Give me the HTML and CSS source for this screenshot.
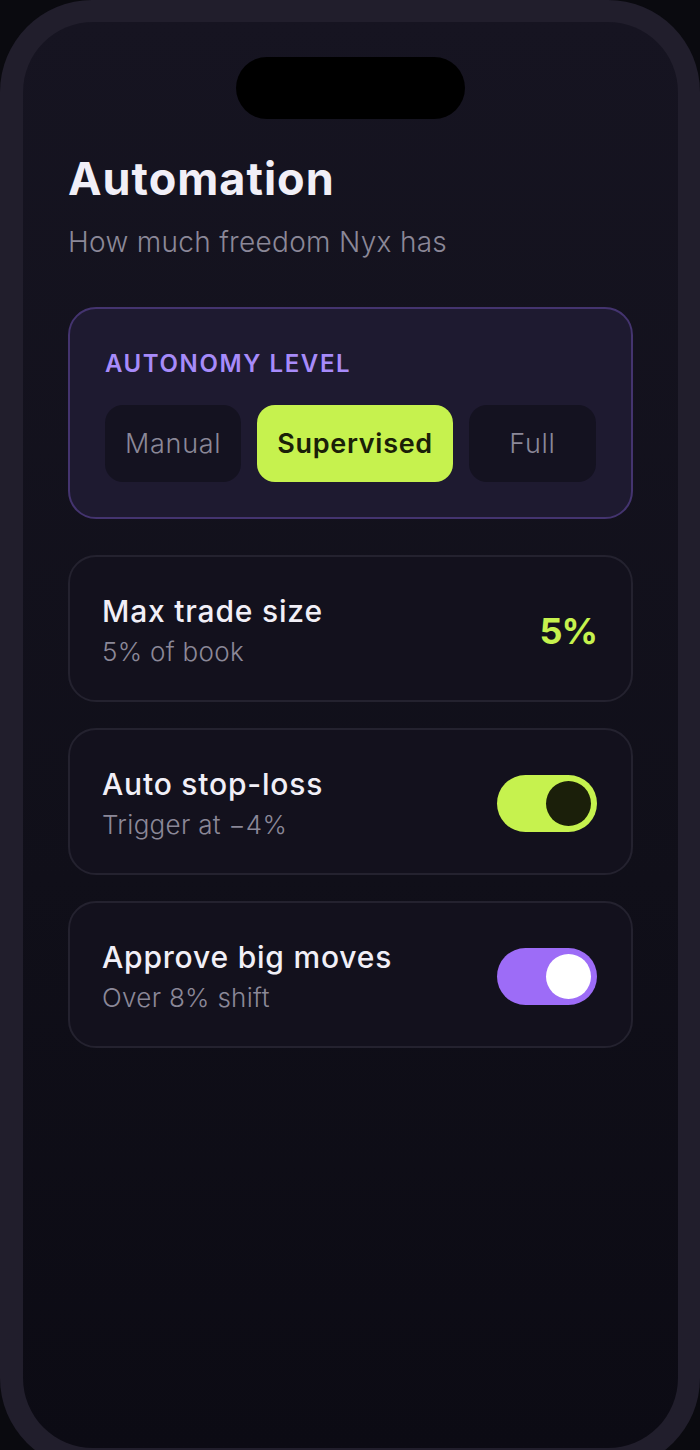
FILE: index.html
```html
<!DOCTYPE html>
<html lang="en">

<head>
    <meta charset="UTF-8">
    <meta name="viewport" content="width=device-width, initial-scale=1.0">
    <title>Automation</title>
    <link rel="stylesheet" href="styles.css">
</head>

<body>
    <div class="phone">
        <div class="screen">
            <div class="island"></div>

            <h1 class="title">Automation</h1>
            <p class="subtitle">How much freedom Nyx has</p>

            <div class="autonomy">
                <div class="autonomy-label">AUTONOMY LEVEL</div>
                <div class="levels">
                    <button class="level">Manual</button>
                    <button class="level active">Supervised</button>
                    <button class="level">Full</button>
                </div>
            </div>

            <div class="setting">
                <div class="setting-text">
                    <div class="setting-name">Max trade size</div>
                    <div class="setting-desc">5% of book</div>
                </div>
                <div class="setting-value">5%</div>
            </div>

            <div class="setting">
                <div class="setting-text">
                    <div class="setting-name">Auto stop-loss</div>
                    <div class="setting-desc">Trigger at −4%</div>
                </div>
                <div class="toggle lime"><span class="knob"></span></div>
            </div>

            <div class="setting">
                <div class="setting-text">
                    <div class="setting-name">Approve big moves</div>
                    <div class="setting-desc">Over 8% shift</div>
                </div>
                <div class="toggle violet"><span class="knob"></span></div>
            </div>
        </div>
    </div>
</body>

</html>
```

FILE: styles.css
```css
body {
    margin: 0;
    background-color: #0a0a0f;
    font-family: Inter, "Noto Sans", sans-serif;
    overflow: hidden;
}

.phone {
    width: 700px;
    height: 1470px;
    box-sizing: border-box;
    padding: 22px 22px 22px 23px;
    border-radius: 92px;
    background-color: #211e2c;
}

.screen {
    height: 100%;
    box-sizing: border-box;
    padding: 35px 45px 0 45px;
    border-radius: 70px;
    background: linear-gradient(180deg, #161421 0%, #100f19 60%, #0c0b14 100%);
}

.island {
    width: 229px;
    height: 62px;
    margin: 0 auto;
    border-radius: 31px;
    background-color: #000;
}

.title {
    margin: 33px 0 0;
    font-size: 45px;
    line-height: 53px;
    font-weight: 700;
    letter-spacing: 1px;
    color: #f1eff7;
}

.subtitle {
    margin: 20px 0 0;
    font-size: 28px;
    line-height: 34px;
    font-weight: 300;
    letter-spacing: 0.3px;
    color: #8b8898;
}

.autonomy {
    margin-top: 48px;
    padding: 40px 35px 35px;
    border: 2px solid #44346f;
    border-radius: 28px;
    background-color: #1e1a30;
}

.autonomy-label {
    font-size: 24px;
    line-height: 29px;
    font-weight: 600;
    letter-spacing: 1.6px;
    color: #a78bfa;
}

.levels {
    display: flex;
    gap: 16px;
    margin-top: 27px;
}

.level {
    flex: 1;
    height: 77px;
    padding: 0 20px;
    border: none;
    border-radius: 18px;
    background-color: #141220;
    font-family: inherit;
    font-size: 27px;
    font-weight: 300;
    letter-spacing: 0.7px;
    color: #8b8898;
    white-space: nowrap;
}

.level.active {
    background-color: #c6f24e;
    color: #1a2008;
    font-weight: 600;
}

.setting {
    display: flex;
    align-items: center;
    justify-content: space-between;
    margin-top: 26px;
    padding: 36px 34px 32px 32px;
    border: 2px solid #24222f;
    border-radius: 28px;
    background-color: #13111d;
}

.autonomy + .setting {
    margin-top: 36px;
}

.setting-name {
    font-size: 30px;
    line-height: 36px;
    font-weight: 500;
    letter-spacing: 0.8px;
    color: #f1eff7;
}

.setting-desc {
    margin-top: 7px;
    font-size: 26px;
    line-height: 32px;
    font-weight: 300;
    letter-spacing: 0.3px;
    color: #8b8898;
}

.setting-value {
    font-size: 36px;
    font-weight: 700;
    letter-spacing: -1px;
    color: #c6f24e;
}

.toggle {
    display: flex;
    justify-content: flex-end;
    align-items: center;
    width: 100px;
    height: 57px;
    box-sizing: border-box;
    padding: 0 6px;
    border-radius: 29px;
}

.toggle .knob {
    width: 45px;
    height: 45px;
    border-radius: 50%;
}

.toggle.lime {
    background-color: #c6f24e;
}

.toggle.lime .knob {
    background-color: #1b1f0a;
}

.toggle.violet {
    background-color: #9d6cf7;
}

.toggle.violet .knob {
    background-color: #fff;
}
```
